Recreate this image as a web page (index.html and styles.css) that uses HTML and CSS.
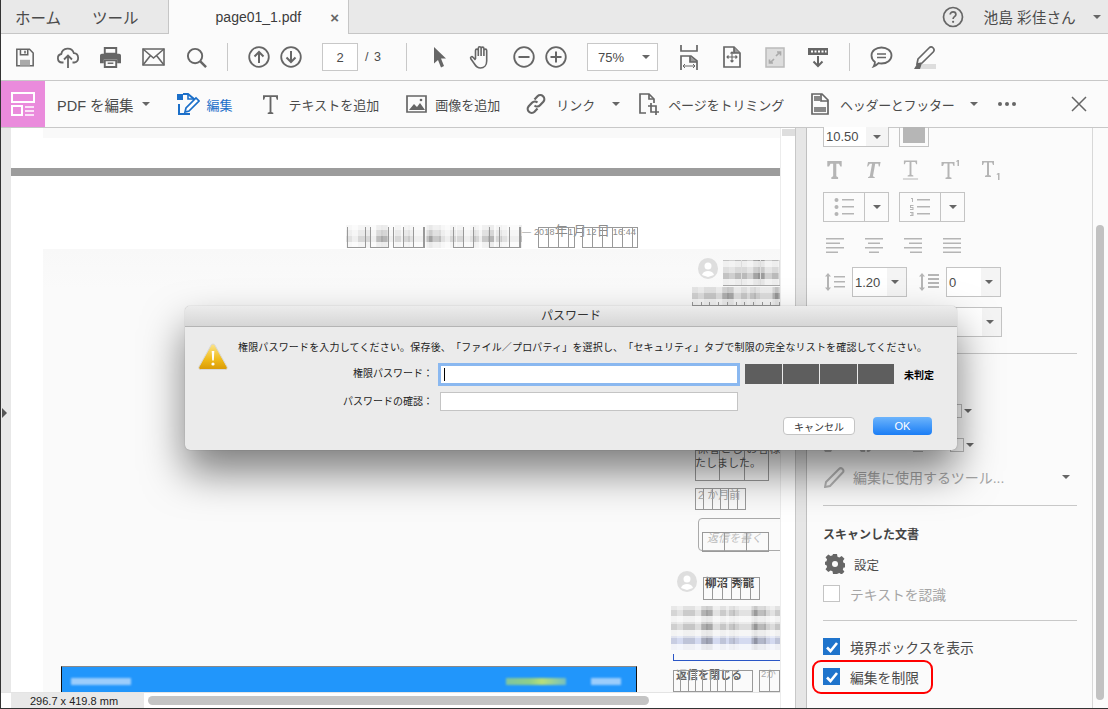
FILE: index.html
```html
<!DOCTYPE html>
<html lang="ja">
<head>
<meta charset="utf-8">
<title>page01_1.pdf</title>
<link rel="stylesheet" href="styles.css">
</head>
<body>
<div class="app">
  <header class="tabs">
    <span class="tab-link home">ホーム</span>
    <span class="tab-link tool">ツール</span>
    <div class="doc-tab"><span class="doc-name">page01_1.pdf</span><span class="doc-close">×</span></div>
    <svg class="help" width="22" height="22" viewBox="0 0 22 22"><circle cx="11" cy="11" r="9.5" fill="none" stroke="#666" stroke-width="1.7"/><path d="M8.2 8.6c0-1.8 1.3-2.7 2.9-2.7s2.8 1 2.8 2.5c0 2.300-2.800 2.300-2.800 4.500" fill="none" stroke="#666" stroke-width="1.7"/><circle cx="11.100" cy="15.800" r="1.100" fill="#666"/></svg>
    <span class="user">池島 彩佳さん</span>
    <span class="caret user-caret"></span>
  </header>

  <nav class="toolbar">
    <span class="tb-ico"><svg width="20" height="21" viewBox="0 0 22 22" fill="none" stroke="#666" stroke-width="1.700"><path d="M2 2h14l4 4v14H2z"/><path d="M6 2v6h8V2M11 3.500v3"/><path d="M5.500 13.500h11V20h-11z" fill="#aaa" stroke="none"/></svg></span>
    <span class="tb-ico"><svg width="24" height="24" viewBox="0 0 24 24" fill="none" stroke="#666" stroke-width="1.800"><path d="M7.500 17.500H6a4.300 4.300 0 0 1-.7-8.500 6.500 6.500 0 0 1 12.600-.8 4.700 4.700 0 0 1 .4 9.300h-1.800"/><path d="M12 23V10.500M8 14.500l4-4 4 4"/></svg></span>
    <span class="tb-ico"><svg width="23" height="21" viewBox="0 0 24 22"><path d="M6 1h12v6H6z" fill="none" stroke="#666" stroke-width="2"/><path d="M3 7h18a2 2 0 0 1 2 2v8h-4v-4H5v4H1V9a2 2 0 0 1 2-2z" fill="#666"/><path d="M6 14h12v7H6z" fill="none" stroke="#666" stroke-width="2"/><path d="M9 17h6" stroke="#666" stroke-width="1.500"/></svg></span>
    <span class="tb-ico"><svg width="23" height="18" viewBox="0 0 23 18" fill="none" stroke="#666" stroke-width="1.600"><path d="M1 1h21v16H1z"/><path d="M1 1l10.500 9L22 1M1 17l7.500-9.500M22 17l-7.500-9.500"/></svg></span>
    <span class="tb-ico"><svg width="21" height="21" viewBox="0 0 22 22" fill="none" stroke="#666" stroke-width="2"><circle cx="9.500" cy="9.500" r="7.500"/><path d="M15 15l6 6" stroke-width="2.600"/></svg></span>
    <span class="tb-sep sep-a"></span>
    <span class="tb-ico nav-ico"><svg width="22" height="22" viewBox="0 0 22 22" fill="none" stroke="#666" stroke-width="1.800"><circle cx="11" cy="11" r="9.800"/><path d="M11 17V6M6.500 10.500L11 6l4.500 4.500" stroke-width="2"/></svg></span>
    <span class="tb-ico nav-ico"><svg width="22" height="22" viewBox="0 0 22 22" fill="none" stroke="#666" stroke-width="1.800"><circle cx="11" cy="11" r="9.800"/><path d="M11 5v11M6.500 11.500L11 16l4.500-4.500" stroke-width="2"/></svg></span>
    <span class="page-box">2</span>
    <span class="page-total">/ 3</span>
    <span class="tb-sep"></span>
    <span class="tb-ico arrow-ico"><svg width="13" height="21" viewBox="0 0 13 21"><path d="M1 0l12 11.500H8l3 7.500-3 1.500-3-7.500L1 16.500z" fill="#666"/></svg></span>
    <span class="tb-ico hand-ico"><svg width="24" height="24" viewBox="0 0 24 24" fill="none" stroke="#666" stroke-width="1.600"><path d="M6.500 14V5.500a1.400 1.400 0 0 1 2.800 0V11M9.300 11V3.200a1.400 1.400 0 0 1 2.800 0V11M12.100 11V3.500a1.400 1.400 0 0 1 2.800 0V11M14.900 11V5.500a1.400 1.400 0 0 1 2.800 0V16c0 4-2.500 7-6.200 7-3 0-4.500-1.500-6-4L1.800 13.800c-.9-1.700 1.100-2.800 2.200-1.500L6.500 15"/></svg></span>
    <span class="tb-ico zoom-ico"><svg width="22" height="22" viewBox="0 0 22 22" fill="none" stroke="#666" stroke-width="1.800"><circle cx="11" cy="11" r="9.800"/><path d="M5.500 11h11" stroke-width="2"/></svg></span>
    <span class="tb-ico zoom-ico"><svg width="22" height="22" viewBox="0 0 22 22" fill="none" stroke="#666" stroke-width="1.800"><circle cx="11" cy="11" r="9.800"/><path d="M5.500 11h11M11 5.500v11" stroke-width="2"/></svg></span>
    <span class="zoom-select">75%<span class="caret"></span></span>
    <span class="tb-ico first-view"><svg width="18" height="25" viewBox="0 0 18 25" fill="none" stroke="#666" stroke-width="1.700"><path d="M1 0v6h16V0"/><path d="M1 25V11h10l6 5v9"/><path d="M10 11v6h7" fill="#999"/><path d="M3 21h12M5 19l-2 2 2 2M13 19l2 2-2 2" stroke-width="1"/></svg></span>
    <span class="tb-ico"><svg width="18" height="22" viewBox="0 0 18 22" fill="none" stroke="#666" stroke-width="1.700"><path d="M1 1h10l6 6v14H1z"/><path d="M11 1v6h6" fill="#999"/><path d="M9 6v10M4 11h10M7.500 7.500L9 6l1.500 1.500M7.500 14.500L9 16l1.500-1.500M5.500 9.500L4 11l1.500 1.500M12.500 9.500L14 11l-1.500 1.500" stroke-width="1.100"/></svg></span>
    <span class="tb-ico"><svg width="20" height="21" viewBox="0 0 20 21"><path d="M1 1h18v19H1z" fill="#ddd" stroke="#bbb" stroke-width="1.500"/><path d="M11 9l4-4M12 5h3.500v3.500M9 12l-4 4M8 16H4.500v-3.500" fill="none" stroke="#aaa" stroke-width="1.700"/></svg></span>
    <span class="tb-ico"><svg width="22" height="21" viewBox="0 0 22 21"><path d="M1 1h20v7H1z" fill="#666"/><path d="M4 3.500h2v2H4zM7.500 3.500h2v2h-2zM11 3.500h2v2h-2zM14.500 3.500h2v2h-2zM18 3.500h1.500v2H18z" fill="#fff"/><path d="M11 9v10M6.500 14.500L11 19l4.500-4.500" fill="none" stroke="#666" stroke-width="2"/></svg></span>
    <span class="tb-sep sep-c"></span>
    <span class="tb-ico comment-ico"><svg width="23" height="22" viewBox="0 0 23 22" fill="none" stroke="#666" stroke-width="1.800"><path d="M11.500 1.500c5.600 0 10 3.500 10 8s-4.400 8-10 8c-1 0-2-.1-3-.4-1.200 1.300-2.900 2.600-4.800 3.300.8-1.300 1.300-2.800 1.200-4.500C2.900 14.500 1.500 12.100 1.500 9.500c0-4.500 4.400-8 10-8z"/><path d="M7 8h9M7 11.500h9" stroke-width="1.500"/></svg></span>
    <span class="tb-ico pen-ico"><svg width="23" height="23" viewBox="0 0 23 23"><path d="M6 18h17v5H6z" fill="#ddd"/><path d="M5 13L16 2c1.200-1.200 3-1.200 4.200 0s1 2.800 0 4L9 17l-5 1z" fill="none" stroke="#666" stroke-width="1.700"/><path d="M4 18l-3 5h6l2-6z" fill="#666"/></svg></span>
  </nav>

  <nav class="editbar">
    <span class="pink"><svg width="26" height="26" viewBox="0 0 26 26" fill="none" stroke="#fff" stroke-width="2"><path d="M2 2h22v9H2zM2 15h10v9H2z"/><path d="M15 16h9M15 20h9M15 24h9" stroke-width="1.300"/></svg></span>
    <span class="edit-title">PDF を編集</span><span class="caret title-caret"></span>
    <svg class="ed-ico e1" width="24" height="24" viewBox="0 0 24 24" fill="none" stroke="#1b6fc9" stroke-width="2"><path d="M7 2h5l6 5v3M3 12v10h11" /><path d="M12 2v5h6" stroke-width="1.600"/><path d="M1 2h6v6H1z" fill="#1b6fc9" stroke="none"/><path d="M9 20l1-4L20 6l3 3-10 10z" fill="#fff" stroke-width="1.700"/></svg>
    <span class="ed-text blue t1">編集</span>
    <svg class="ed-ico e2" width="15" height="19" viewBox="0 0 16 20" fill="#666"><path d="M0 0h16v5h-1.300l-1-3H9v16l2 .7V20H5v-1.300l2-.7V2H2.300l-1 3H0z"/></svg>
    <span class="ed-text t2">テキストを追加</span>
    <svg class="ed-ico e3" width="21" height="18" viewBox="0 0 21 18"><path d="M1 1h19v16H1z" fill="none" stroke="#666" stroke-width="1.700"/><path d="M3 15l5-6 3 3 3-4 5 7z" fill="#666"/><circle cx="15" cy="5" r="1.300" fill="#666"/></svg>
    <span class="ed-text t3">画像を追加</span>
    <svg class="ed-ico e4" width="22" height="22" viewBox="0 0 22 22" fill="none" stroke="#666" stroke-width="2.200"><path d="M9.500 6.500l3-3.200a4 4 0 0 1 5.800 5.500l-3.300 3.400a4 4 0 0 1-5.500.3"/><path d="M12.500 15.500l-3 3.200a4 4 0 0 1-5.800-5.500L7 9.800a4 4 0 0 1 5.500-.3"/></svg>
    <span class="ed-text t4">リンク</span><span class="caret c4"></span>
    <svg class="ed-ico e5" width="20" height="22" viewBox="0 0 20 22" fill="none" stroke="#666" stroke-width="1.700"><path d="M7 20H1V1h9l5 5v4"/><path d="M10 1v5h5M12 10v9h8M9 13h8v9" stroke-width="1.700"/></svg>
    <span class="ed-text t5">ページをトリミング</span>
    <svg class="ed-ico e6" width="18" height="22" viewBox="0 0 18 22"><path d="M1 1h10l6 6v14H1z" fill="none" stroke="#666" stroke-width="1.700"/><path d="M10 1v7h7" fill="none" stroke="#666" stroke-width="1.700"/><path d="M3 3h6v5H3zM3 14h12v5H3z" fill="#888"/></svg>
    <span class="ed-text t6">ヘッダーとフッター</span><span class="caret c6"></span>
    <span class="dots"><i></i><i></i><i></i></span>
    <svg class="ed-close" width="16" height="16" viewBox="0 0 16 16" stroke="#666" stroke-width="1.500"><path d="M1 1l14 14M15 1L1 15"/></svg>
  </nav>

  <main class="main">
    <section class="viewer">
      <div class="gutter"><span class="handle"></span></div>
      <div class="page">
        <div class="top-strip"></div>
        <div class="band"></div>
        <div class="sheet"></div>

        <div class="mosaic m-head"></div>
        <span class="pdf-date">— 2018<em>年</em>1<em>月</em>12<em>日</em> 16:44</span>
        <div class="boxes b-head"><i class="w19"></i><i class="w19"></i><i class="w32"></i><i class="w21"></i><i class="w32 far"></i><i class="w37"></i><i class="w56"></i></div>

        <svg class="avatar a1" viewBox="0 0 20 21"><ellipse cx="10" cy="10.500" rx="10" ry="10.500" fill="#dedede"/><circle cx="10" cy="8" r="3.500" fill="#fff"/><path d="M4 17c1-3 3-4 6-4s5 1 6 4l-6 2z" fill="#fff"/></svg>
        <div class="mosaic m-name"></div>
        <div class="boxes b-name"><i></i><i></i><i></i></div>
        <div class="mosaic m-line"></div>
        <div class="boxes b-line"><i></i><i></i><i></i><i></i><i></i><i></i><i></i><i></i><i></i><i></i></div>

        <span class="pdf-t t-hid">係者とし お客様</span>
        <div class="boxes b-done"><i></i><i></i><i></i></div>
        <span class="pdf-t t-done">たしました。</span>
        <div class="boxes b-ago"><i></i><i></i><i></i><i></i><i></i><i></i></div>
        <span class="pdf-t t-ago">2 か月前</span>

        <div class="reply-box"></div>
        <span class="pdf-t t-reply">返信を書く</span>
        <div class="boxes b-reply"><i></i><i></i><i></i></div>

        <svg class="avatar a2" viewBox="0 0 20 21"><ellipse cx="10" cy="10.500" rx="10" ry="10.500" fill="#dedede"/><circle cx="10" cy="8" r="3.500" fill="#fff"/><path d="M4 17c1-3 3-4 6-4s5 1 6 4l-6 2z" fill="#fff"/></svg>
        <span class="pdf-t t-author">柳沼 秀龍</span>
        <div class="boxes b-author"><i></i><i></i><i></i><i></i><i></i><i></i></div>
        <div class="mosaic m-body"></div>
        <div class="mosaic m-body2"></div>
        <div class="mosaic m-body3"></div>
        <div class="blue-line"></div>
        <span class="pdf-t t-close">返信を閉じる</span>
        <div class="boxes b-close"><i></i><i></i><i></i><i></i><i></i><i></i><i></i><i></i><i class="wide"></i></div>
        <span class="pdf-t t-two">2か</span>
        <div class="boxes b-two"><i></i><i></i></div>

        <div class="banner"><span class="bn bn1"></span><span class="bn bn2"></span><span class="bn bn3"></span></div>
      </div>
      <div class="vgutter"><span class="vwhite"><span class="vthumb"></span></span><span class="vstrip"></span></div>
      <footer class="status">
        <span class="size">296.7 x 419.8 mm</span>
        <div class="track"><span class="thumb"></span></div>
      </footer>
    </section>

    <aside class="panel">
      <div class="panel-body">
        <div class="row row-font">
          <span class="select s-size clip"><b>10.50</b><span class="caret"></span></span>
          <span class="swatch"><i></i></span>
        </div>
        <div class="row row-style">
          <svg width="17" height="18" viewBox="0 0 18 20" fill="#b5b5b5"><path d="M1 0h16v6h-1.500l-1.500-3h-3v14l2 1v2H5.500v-2l2-1V3h-3L3 6H1z"/></svg>
          <svg width="17" height="18" viewBox="0 0 18 20" fill="#b5b5b5"><path d="M4 1h14l-1 5h-1l-.5-3H12L9.500 17l2 1v1H4v-1l2-1L8.500 3H6L4 6H3z"/></svg>
          <svg width="17" height="20" viewBox="0 0 18 20" fill="#b5b5b5"><path d="M2 0h14v4h-1l-1-2.500h-4V15l2 .7V17H6v-1.300l2-.7V1.500H4L3 4H2zM1 19h16v1H1z"/></svg>
          <svg width="21" height="20" viewBox="0 0 20 20" fill="#b5b5b5"><path d="M1 2h13v4h-1l-1-2.500H9V17l2 .7V19H5v-1.300l2-.7V3.500H3.500L2.500 6H1zM17 0h1.500v6H17V1.500l-1.200.5V1z"/></svg>
          <svg width="20" height="20" viewBox="0 0 20 20" fill="#b5b5b5"><path d="M0 1h12v4h-1l-1-2.500H7V15l2 .7V17H3v-1.300l2-.7V2.500H2L1 5H0zM16 13h1.500v7H16v-5.500l-1.200.5v-1z"/></svg>
        </div>
        <div class="row row-list">
          <span class="split"><span class="split-ico"><svg width="20" height="18" viewBox="0 0 20 18" fill="#b5b5b5"><circle cx="2.500" cy="2" r="2"/><circle cx="2.500" cy="9" r="2"/><circle cx="2.500" cy="16" r="2"/><path d="M8 1h12v1.500H8zM8 8h12v1.500H8zM8 15h12v1.500H8z"/></svg></span><span class="split-btn"><span class="caret"></span></span></span>
          <span class="split"><span class="split-ico"><svg width="20" height="18" viewBox="0 0 20 18" fill="#b5b5b5"><path d="M1 0h2v4H2V1H1zM0 7h3.500v1H1v1h2.500v3H0v-1h2.500v-1H0zM0 14h3.500v4H0v-1h2.500v-.5H1v-1h1.500V15H0zM7 1h13v1.500H7zM7 8h13v1.500H7zM7 15h13v1.500H7z"/></svg></span><span class="split-btn"><span class="caret"></span></span></span>
        </div>
        <div class="row row-align">
          <svg width="18" height="15" viewBox="0 0 18 15" fill="#b5b5b5"><path d="M0 0h18v1.500H0zM0 4.500h14v1.500H0zM0 9h18v1.500H0zM0 13.500h12V15H0z"/></svg>
          <svg width="18" height="15" viewBox="0 0 18 15" fill="#b5b5b5"><path d="M0 0h18v1.500H0zM3 4.500h12v1.500H3zM0 9h18v1.500H0zM4 13.500h10V15H4z"/></svg>
          <svg width="18" height="15" viewBox="0 0 18 15" fill="#b5b5b5"><path d="M0 0h18v1.500H0zM5 4.500h13v1.500H5zM0 9h18v1.500H0zM6 13.500h12V15H6z"/></svg>
          <svg width="18" height="15" viewBox="0 0 18 15" fill="#b5b5b5"><path d="M0 0h18v1.500H0zM0 4.500h18v1.500H0zM0 9h18v1.500H0zM0 13.500h18V15H0z"/></svg>
        </div>
        <div class="row row-space">
          <svg class="sp" width="21" height="18" viewBox="0 0 21 18" fill="#b5b5b5"><path d="M4 0l3 3.500H5V14.500h2L4 18l-3-3.500h2V3.500H1zM10 3h11v1.500H10zM10 8h11v1.500H10zM10 13h11v1.500H10z"/></svg>
          <span class="select s-line"><b>1.20</b><span class="caret"></span></span>
          <svg class="sp sp2" width="21" height="18" viewBox="0 0 21 18" fill="#b5b5b5"><path d="M4 0l3 3.500H5V14.500h2L4 18l-3-3.500h2V3.500H1zM10 1h11v2H10zM10 5h11v2H10zM10 9h11v2H10zM10 13h11v2H10z"/></svg>
          <span class="select s-line"><b>0</b><span class="caret"></span></span>
        </div>
        <div class="row row-hidden">
          <span class="select s-hidden"><b></b><span class="caret"></span></span>
        </div>
        <hr class="rule r1">
        <div class="row row-under u1"><span class="mini-box"></span><span class="caret"></span></div>
        <div class="row row-under u2">
          <svg class="under-ico" width="104" height="14" viewBox="0 0 104 14" fill="#b5b5b5"><path d="M0 10l8-8 2 8-2 4H2zM34 8l8-6v12h-4zM52 8l-6 6h-2V2h2zM86 4h18v2H86zM86 9h18v2H86zM90 13h10v1H90z"/></svg>
          <span class="mini-box"></span><span class="caret"></span>
        </div>
        <div class="row row-tool">
          <svg width="21" height="21" viewBox="0 0 21 21" fill="none" stroke="#b5b5b5" stroke-width="2"><path d="M2 15L15 2c1-1 2.500-1 3.500 0s1.200 2.500.2 3.500L6 19l-5 1z"/></svg>
          <span class="tool-text">編集に使用するツール...</span><span class="caret"></span>
        </div>
        <hr class="rule r2">
        <h3 class="sec-title">スキャンした文書</h3>
        <div class="row row-gear">
          <svg width="20" height="20" viewBox="0 0 20 20"><path d="M8 0h4l.5 2.800 1.800.8L16.700 2l2.800 2.800-1.600 2.300.8 1.900 2.800.5-.5 4-2.400.1-.8 1.800 1.600 2.300-2.800 2.800-2.300-1.600-1.800.8L12 20H8l-.5-2.800-1.800-.8-2.400 1.600L.5 15.200l1.600-2.300-.8-1.900L-1 10.500V8l2.300-.5.800-1.900L.5 3.300 3.300.5l2.400 1.600 1.800-.8z" fill="#666"/><circle cx="10" cy="10" r="3" fill="#fbfbfb"/></svg>
          <span class="gear-text">設定</span>
        </div>
        <label class="check-row disabled"><span class="check-off"></span><span>テキストを認識</span></label>
        <hr class="rule r3">
        <label class="check-row on"><span class="check-on"><svg width="16" height="16" viewBox="0 0 16 16" fill="none" stroke="#fff" stroke-width="2.600"><path d="M3 8.500l3.500 3.500L13 4"/></svg></span><span>境界ボックスを表示</span></label>
        <label class="check-row on last"><span class="check-on"><svg width="16" height="16" viewBox="0 0 16 16" fill="none" stroke="#fff" stroke-width="2.600"><path d="M3 8.500l3.500 3.500L13 4"/></svg></span><span>編集を制限</span><span class="red-ring"></span></label>
      </div>
      <div class="panel-scroll"><span class="panel-thumb"></span></div>
    </aside>
  </main>

  <div class="dialog">
    <div class="dlg-title">パスワード</div>
    <div class="dlg-body">
      <svg class="warn" width="30" height="27" viewBox="0 0 30 27"><defs><linearGradient id="wg" x1="0" y1="0" x2="0" y2="1"><stop offset="0" stop-color="#fbe48a"/><stop offset=".6" stop-color="#f0bb1a"/><stop offset="1" stop-color="#d99a06"/></linearGradient></defs><path d="M15 1c1 0 1.600.6 2 1.300l12 21.500c.7 1.300 0 2.700-1.600 2.700H2.600C1 26.500.3 25.100 1 23.800L13 2.300C13.400 1.600 14 1 15 1z" fill="url(#wg)" stroke="#d8d8d8"/><path d="M13.700 8h2.600l-.5 9.500h-1.600z" fill="#fff"/><circle cx="15" cy="21" r="1.600" fill="#fff"/></svg>
      <div class="dlg-main">
        <p class="dlg-msg">権限パスワードを入力してください。保存後、「ファイル／プロパティ」を選択し、「セキュリティ」タブで制限の完全なリストを確認してください。</p>
        <div class="dlg-row first">
          <span class="dlg-label">権限パスワード：</span>
          <span class="dlg-input focus"><i class="cursor"></i></span>
          <span class="meter"><i></i><i></i><i></i><i></i></span>
          <span class="verdict">未判定</span>
        </div>
        <div class="dlg-row second">
          <span class="dlg-label">パスワードの確認：</span>
          <span class="dlg-input"></span>
        </div>
        <div class="dlg-actions">
          <span class="btn cancel">キャンセル</span>
          <span class="btn ok">OK</span>
        </div>
      </div>
    </div>
  </div>
</div>
</body>
</html>
```

FILE: styles.css
```css
* { box-sizing: border-box; }
html, body { margin: 0; height: 100%; overflow: hidden; }
body { font-family: "Liberation Sans", "Noto Sans CJK JP", sans-serif; color: #4b4b4b; text-spacing-trim: space-all; }
.app { position: relative; width: 1108px; height: 709px; display: flex; flex-direction: column; background: #fbfbfb; border-left: 1px solid #333; border-bottom: 1px solid #333; overflow: hidden; }
svg { flex: none; display: block; }
.caret { display: inline-block; width: 0; height: 0; border-left: 4px solid transparent; border-right: 4px solid transparent; border-top: 4px solid #666; flex: none; }

/* tabs */
.tabs { height: 34px; flex: none; display: flex; align-items: center; background: #e9e9e9; border-bottom: 1px solid #c6c6c6; }
.tab-link { font-size: 15.5px; color: #4b4b4b; }
.home { margin-left: 14px; }
.tool { margin-left: 31px; }
.doc-tab { margin-left: 29px; width: 181px; height: 34px; margin-bottom: -1px; background: #fbfbfb; border-left: 1px solid #c6c6c6; border-right: 1px solid #c6c6c6; display: flex; align-items: center; }
.doc-name { margin-left: 47px; font-size: 14px; color: #3c3c3c; }
.doc-close { margin-left: 29px; font-size: 15px; font-weight: bold; color: #666; }
.help { margin-left: 593px; }
.user { margin-left: 20px; font-size: 14.700px; }
.user-caret { margin-left: 17px; }

/* main toolbar */
.toolbar { height: 47px; flex: none; display: flex; align-items: center; background: #fbfbfb; border-bottom: 1px solid #c8c8c8; padding-left: 2px; }
.tb-ico { width: 43px; display: flex; justify-content: center; }
.tb-sep { width: 1px; height: 28px; background: #c8c8c8; }
.sep-a { margin-left: 9px; margin-right: 15px; }
.nav-ico { width: 32px; }
.page-box { margin-left: 15px; width: 36px; height: 28px; border: 1px solid #c8c8c8; background: #fff; font-size: 13px; display: flex; align-items: center; justify-content: center; }
.page-total { margin-left: 7px; width: 41px; font-size: 12.500px; word-spacing: 2px; }
.arrow-ico { margin-left: 7px; width: 50px; }
.hand-ico { width: 34px; margin-right: 10px; }
.zoom-ico { width: 32px; }
.zoom-select { margin-left: 15px; width: 71px; height: 28px; border: 1px solid #c8c8c8; background: #fff; font-size: 13px; display: flex; align-items: center; justify-content: space-between; padding: 0 7px 0 10px; }
.first-view { margin-left: 9.500px; }
.sep-c { margin-left: 9.500px; }
.comment-ico { margin-left: 10px; width: 42px; }
.pen-ico { width: 44px; }

/* edit bar */
.editbar { height: 47px; flex: none; display: flex; align-items: center; background: #fbfbfb; border-bottom: 1px solid #c8c8c8; }
.pink { width: 44px; height: 46px; background: #ea8bdc; display: flex; align-items: center; justify-content: center; }
.edit-title { margin-left: 12px; font-size: 14.500px; }
.title-caret { margin-left: 8px; }
.ed-text { font-size: 13px; white-space: nowrap; }
.blue { color: #1b6fc9; }
.e1 { margin-left: 26px; } .t1 { margin-left: 7px; }
.e2 { margin-left: 30px; } .t2 { margin-left: 11px; }
.e3 { margin-left: 27px; } .t3 { margin-left: 8px; }
.e4 { margin-left: 25px; } .t4 { margin-left: 9px; }
.c4 { margin-left: 17px; }
.e5 { margin-left: 19px; } .t5 { margin-left: 9px; letter-spacing: -.1px; }
.e6 { margin-left: 27px; } .t6 { margin-left: 11px; letter-spacing: -.3px; }
.c6 { margin-left: 16px; }
.dots { margin-left: 20px; display: flex; gap: 3px; }
.dots i { width: 4px; height: 4px; border-radius: 50%; background: #666; }
.ed-close { margin-left: 55px; }

/* main */
.main { flex: 1; min-height: 0; display: flex; }
.viewer { position: relative; width: 806px; flex: none; display: grid; grid-template-columns: 10px 769px 27px; grid-template-rows: 1fr 16px; background: #fff; min-height: 0; }
.gutter { background: #e8e8e8; display: flex; align-items: center; }
.handle { margin-left: 1px; margin-top: 6px; width: 0; height: 0; border-top: 5px solid transparent; border-bottom: 5px solid transparent; border-left: 5px solid #555; }
.vgutter { grid-row: 1 / -1; grid-column: 3; display: flex; background: #fff; }
.vwhite { width: 15px; padding: 1px 1px 0; border-left: 1px solid #ececec; }
.vthumb { display: block; width: 13px; height: 7px; background: #dedede; }
.vstrip { flex: 1; background: #e6e6e6; border-left: 1px solid #c8c8c8; border-right: 1px solid #c0c0c0; }

/* pdf page canvas */
.page { position: relative; overflow: hidden; background: #fff; }
.top-strip { position: absolute; left: 32px; right: 0; top: 0; height: 10px; background: #f9f9f9; }
.band { position: absolute; left: 0; right: 0; top: 40px; height: 8px; background: #9c9c9c; }
.sheet { position: absolute; left: 32px; right: 0; top: 121px; bottom: 0; background: linear-gradient(#f8f8f8, #fafafa 40px); }
.mosaic { position: absolute; background-color: #efefef; background-image:
  repeating-linear-gradient(0deg, rgba(255,255,255,.75) 0 6px, rgba(255,255,255,0) 6px 12px, rgba(255,255,255,.45) 12px 18px),
  repeating-linear-gradient(90deg, transparent 0 12px, rgba(0,0,0,.1) 12px 18px, transparent 18px 23px),
  repeating-linear-gradient(90deg, rgba(0,0,0,.06) 0 6px, transparent 6px 18px, rgba(0,0,0,.1) 18px 24px, transparent 24px 31px),
  repeating-linear-gradient(90deg, transparent 0 30px, rgba(0,0,0,.16) 30px 42px, transparent 42px 53px);
  filter: blur(.7px); }
.m-head { left: 335px; top: 97px; width: 176px; height: 23px; }
.m-name { left: 712px; top: 132px; width: 57px; height: 25px; background-color: #cfcfcf; }
.m-line { left: 681px; top: 159px; width: 88px; height: 18px; background-color: #dcdcdc; }
.m-body { left: 660px; top: 478px; width: 109px; height: 16px; background-color: #e2e2e2; }
.m-body2 { left: 660px; top: 494px; width: 109px; height: 14px; background-color: #dcdcdc; }
.m-body3 { left: 660px; top: 508px; width: 109px; height: 14px; background-color: #d4daf0; }
.pdf-date { position: absolute; left: 511px; top: 95px; font-size: 9px; letter-spacing: .2px; line-height: 16px; color: #8c8c8c; white-space: nowrap; }
.pdf-date em { font-style: normal; font-size: 13px; }
.boxes { position: absolute; display: flex; border-bottom: 1px solid #999; border-left: 1px solid #999; }
.boxes i { flex: 1; border-right: 1px solid #999; }
.b-head { left: 336px; top: 99px; width: 292px; height: 21px; gap: 4px; border: 0; }
.b-head i { flex: none; height: 21px; border: 1px solid #999; border-top: 0; background: repeating-linear-gradient(90deg, transparent 0 9px, #999 9px 10px); }
.b-head .w19 { width: 19px; background: none; }
.b-head .w21 { width: 21px; margin-left: 24px; }
.b-head .w32 { width: 32px; }
.b-head .far { margin-left: 11px; }
.b-head .w37 { width: 37px; margin-left: 13px; border-top: 1px solid #999; }
.b-head .w56 { width: 56px; margin-left: 3px; border-top: 1px solid #999; }
.b-name { left: 712px; top: 132px; width: 57px; height: 26px; border-bottom-color: #aaa; border-left: 0; }
.b-name i { border-right-color: #ddd; }
.b-line { left: 681px; top: 174px; width: 88px; height: 4px; }
.b-done { left: 684px; top: 322px; width: 74px; height: 31px; border-top: 1px solid #999; }
.b-ago { left: 684px; top: 360px; width: 51px; height: 22px; border-top: 1px solid #999; }
.b-reply { left: 691px; top: 404px; width: 67px; height: 20px; border-top: 1px solid #999; }
.b-author { left: 692px; top: 449px; width: 57px; height: 23px; border-top: 1px solid #999; }
.b-close { left: 662px; top: 542px; width: 80px; height: 22px; border-top: 1px solid #999; }
.b-close .wide { flex: 3; }
.b-two { left: 748px; top: 542px; width: 21px; height: 22px; border-top: 1px solid #999; border-right: 0; }
.pdf-t { position: absolute; white-space: nowrap; font-size: 11px; color: #666; }
.t-hid { left: 686px; top: 312px; font-size: 11.500px; }
.t-done { left: 684px; top: 326px; color: #555; }
.t-ago { left: 687px; top: 358px; color: #aaa; }
.t-reply { left: 696px; top: 401px; color: #bbb; font-style: italic; }
.t-author { left: 694px; top: 446px; font-size: 11.500px; font-weight: bold; color: #444; }
.t-close { left: 665px; top: 538px; font-weight: bold; color: #666; }
.t-two { left: 750px; top: 538px; font-size: 9.500px; color: #aaa; }
.reply-box { position: absolute; left: 687px; top: 390px; width: 90px; height: 33px; border: 1px solid #aaa; border-radius: 4px; }
.avatar { position: absolute; width: 20px; height: 21px; }
.a1 { left: 687px; top: 130px; }
.a2 { left: 666px; top: 443px; }
.blue-line { position: absolute; left: 662px; right: -1px; top: 526px; height: 7px; border: 1px solid #2a56c6; border-top: 0; }
.banner { position: absolute; left: 50px; top: 538px; width: 576px; height: 26px; background: #2196fb; border: solid #111; border-width: 0 1px; border-top: 1px solid #888; }
.bn { position: absolute; top: 11px; height: 7px; filter: blur(1px); }
.bn1 { left: 9px; width: 60px; background: #9ccdfb; }
.bn2 { left: 444px; width: 60px; background: linear-gradient(90deg, #7fc5a0, #8fcf8a 40%, #b8e07a 60%, #74bfc0); }
.bn3 { left: 529px; width: 30px; background: #9ccdfb; }

/* status */
.status { grid-column: 1 / 3; grid-row: 2; display: flex; background: #fff; border-top: 1px solid #e4e4e4; }
.size { width: 133px; padding-left: 19px; background: #e8e8e8; margin-left: 10px; font-size: 11px; color: #222; line-height: 16px; white-space: nowrap; }
.track { flex: 1; padding: 3px 4px; }
.thumb { display: block; width: 501px; height: 9px; border-radius: 5px; background: #c4c4c4; }

/* panel */
.panel { flex: 1; min-width: 0; display: flex; background: #fbfbfb; }
.panel-body { width: 286px; padding-left: 16px; border-right: 1px solid #d8d8d8; flex: none; }
.panel-scroll { flex: 1; padding: 97px 0 8px 3px; }
.panel-thumb { display: block; width: 8px; height: 100%; border-radius: 4px; background: #c2c2c2; }
.row { display: flex; align-items: center; }
.select { display: flex; align-items: center; justify-content: space-between; border: 1px solid #c4c4c4; background: linear-gradient(90deg, #fff 65%, #f4f4f4 65%); font-size: 13px; }
.select b { font-weight: normal; padding-left: 2px; }
.select .caret { margin-right: 7px; }
.row-font { height: 19px; gap: 10px; }
.s-size { width: 66px; height: 20px; margin-top: -1px; border-top: 0; }
.swatch { width: 30px; height: 20px; margin-top: -1px; border: 1px solid #c4c4c4; border-top: 0; padding: 0 3px 3px; display: flex; }
.swatch i { flex: 1; background: #b6b6b6; }
.row-style { margin-top: 13px; height: 20px; gap: 21px; padding-left: 3px; }
.row-list { margin-top: 12px; gap: 10px; }
.split { width: 66px; height: 30px; border: 1px solid #c4c4c4; display: flex; }
.split-ico { width: 41px; display: flex; align-items: center; justify-content: center; border-right: 1px solid #c4c4c4; }
.split-btn { flex: 1; display: flex; align-items: center; justify-content: center; }
.row-align { margin-top: 15px; gap: 21px; padding-left: 3px; height: 16px; }
.row-space { margin-top: 14px; height: 30px; }
.s-line { width: 55px; height: 30px; margin-left: 7px; }
.sp { margin-left: 1px; }
.sp2 { margin-left: 11px; }
.row-hidden { margin-top: 10px; padding-left: 124px; }
.s-hidden { width: 55px; height: 30px; }
.rule { margin: 0; width: 254px; height: 1px; border: 0; background: #c8c8c8; }
.r1 { margin-top: 16px; }
.row-under { height: 14px; padding-left: 125px; gap: 2px; }
.u1 { margin-top: 50px; }
.u2 { margin-top: 20px; padding-left: 0; }
.under-ico { margin-right: 21px; }
.mini-box { width: 14px; height: 14px; border: 1px solid #bbb; }
.row-tool { margin-top: 14px; height: 22px; gap: 8px; }
.row-tool .tool-text { font-size: 14px; color: #a5a5a5; width: 201px; margin-left: 0; }
.row-tool svg { margin-left: 1px; }
.r2 { margin-top: 17px; }
.sec-title { margin: 20px 0 0; font-size: 12px; font-weight: bold; line-height: 18px; color: #444; }
.row-gear { margin-top: 10px; height: 20px; gap: 9px; padding-left: 2px; }
.gear-text { font-size: 12.500px; }
.check-row { display: flex; align-items: center; gap: 10px; font-size: 13.800px; height: 17px; position: relative; }
.disabled { margin-top: 11px; color: #a5a5a5; }
.check-off { width: 17px; height: 17px; border: 1px solid #c4c4c4; background: #fff; }
.r3 { margin-top: 18px; }
.on { margin-top: 17px; }
.last { margin-top: 13px; }
.check-on { width: 17px; height: 17px; background: #1f74cc; display: flex; align-items: center; justify-content: center; }
.red-ring { position: absolute; left: -11px; top: -8px; width: 121px; height: 34px; border: 2px solid #f00; border-radius: 9px; }

/* dialog */
.dialog { position: absolute; left: 184px; top: 306px; width: 772px; height: 144px; background: #ebebeb; border-radius: 5px; box-shadow: 0 22px 42px rgba(0,0,0,.5), 0 0 1px rgba(0,0,0,.4); display: flex; flex-direction: column; font-size: 10px; color: #222; }
.dlg-title { height: 21px; flex: none; background: linear-gradient(#ececec, #d6d6d6); border-bottom: 1px solid #b4b4b4; border-radius: 5px 5px 0 0; text-align: center; font-size: 12px; line-height: 21px; color: #333; }
.dlg-body { flex: 1; display: flex; padding: 10px 0 0 13px; }
.warn { margin-top: 6px; }
.dlg-main { margin-left: 10px; flex: 1; }
.dlg-msg { margin: 3px 0 0; font-size: 10px; line-height: 15px; letter-spacing: .17px; white-space: nowrap; }
.dlg-row { display: flex; align-items: center; }
.dlg-row.first { margin-top: 9px; height: 20px; }
.dlg-row.second { margin-top: 8px; height: 19px; }
.dlg-label { width: 195px; margin-right: 7px; text-align: right; font-size: 10px; line-height: 12px; white-space: nowrap; }
.dlg-input { width: 298px; height: 19px; background: #fff; border: 1px solid #c4c4c4; display: flex; align-items: center; }
.focus { box-shadow: 0 0 0 2px #8ab8f0; border-color: #8ab8f0; }
.cursor { margin-left: 3px; width: 1px; height: 13px; background: #000; }
.meter { margin-left: 7px; display: flex; gap: 1px; }
.meter i { width: 36.500px; height: 20px; background: #5e5e5e; }
.verdict { margin-left: 10px; font-weight: bold; color: #000; }
.dlg-actions { margin-top: 6px; display: flex; padding-left: 545px; gap: 18px; }
.btn { height: 18px; border-radius: 4px; font-size: 10px; display: flex; align-items: center; justify-content: center; }
.cancel { width: 72px; background: #fff; border: 1px solid #c4c4c4; color: #333; }
.ok { width: 59px; background: linear-gradient(#6cb4fc, #1a7df5); color: #fff; font-size: 11px; }
```
